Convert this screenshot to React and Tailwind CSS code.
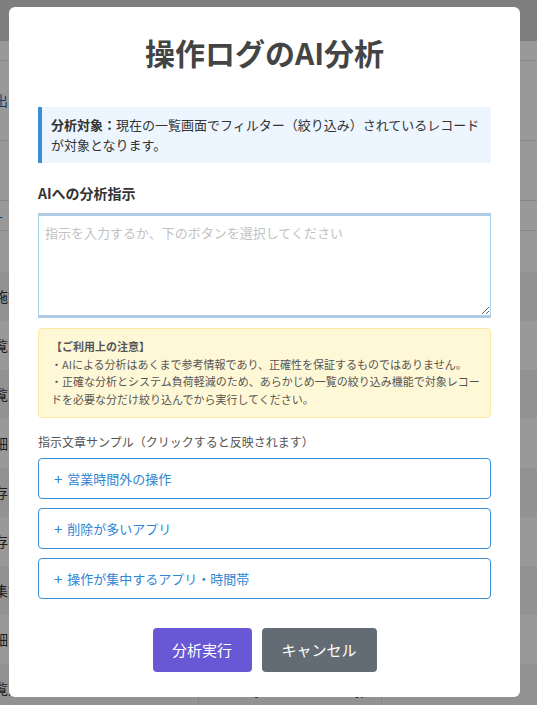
import { useState } from 'react'

const FONT = { fontFamily: '"Noto Sans CJK JP", "Noto Sans", sans-serif' }

const ROWS = [
  { name: '施設一覧', mail: 'sato_k@smxdo.co.jp', apps: '1,2,3' },
  { name: '覧照会', mail: 'tanaka_m@smxdo.co.jp', apps: '4,5' },
  { name: '覧照会', mail: 'suzuki_a@smxdo.co.jp', apps: '1,6' },
  { name: '細照会', mail: 'ito_y@smxdo.co.jp', apps: '2,3,7' },
  { name: '存', mail: 'kato_h@smxdo.co.jp', apps: '8' },
  { name: '存画面', mail: 'yamada_t@smxdo.co.jp', apps: '1,9' },
  { name: '集計', mail: 'kimura_s@smxdo.co.jp', apps: '3,4' },
  { name: '細照会', mail: 'hayashi_r@smxdo.co.jp', apps: '5,6' },
  { name: '覧照会（PC)', mail: 'kanko_jun@smxdo.co.jp', apps: '1,2,3,4,5,6,7,8,9' },
]

const SAMPLES = [
  '営業時間外の操作',
  '削除が多いアプリ',
  '操作が集中するアプリ・時間帯',
]

function BackgroundPage() {
  return (
    <div className="w-[537px] h-[705px] overflow-hidden bg-white text-[#333]" style={FONT}>
      <div className="h-[41px] bg-[#d4d4d4]" />
      <div className="h-[20px] border-b border-[#ddd]" />
      <div className="h-[80px] border-b border-[#ddd] flex items-center">
        <span className="-ml-[6px] text-[14px] text-[#1e6bb8]">出力</span>
      </div>
      <div className="h-[60px] border-b border-[#ddd]" />
      <div className="h-[30px] border-b border-[#ddd] flex items-center">
        <span className="-ml-[2px] text-[14px] text-[#1e6bb8]">-</span>
      </div>
      <div className="h-[41px]" />
      {ROWS.map((r, i) => (
        <div
          key={i}
          className={`h-[49px] grid grid-cols-[198px_183px_1fr] items-center text-[14px] ${i % 2 === 0 ? 'bg-[#f4f4f4]' : 'bg-white'}`}
        >
          <span className="-ml-[6px] whitespace-nowrap">{r.name}</span>
          <span className="h-full flex items-center pl-[9px] border-l border-[#ddd] whitespace-nowrap">{r.mail}</span>
          <span className="h-full flex items-center pl-[10px] border-l border-[#ddd] whitespace-nowrap">{r.apps}</span>
        </div>
      ))}
    </div>
  )
}

export default function App() {
  const [text, setText] = useState('')

  return (
    <div className="relative w-[537px] h-[705px] overflow-hidden">
      <BackgroundPage />

      {/* Overlay */}
      <div className="absolute inset-0 bg-black/40" />

      {/* Modal */}
      <div
        className="absolute left-[9px] top-[7px] w-[511px] h-[690px] bg-white rounded-[6px] px-[29px] pt-[28px]"
        style={FONT}
      >
        <h2 className="text-center text-[30px] leading-[34px] font-bold text-[#444]">
          操作ログのAI分析
        </h2>

        {/* Target info */}
        <div className="mt-[38px] bg-[#edf5fe] border-l-4 border-[#3a8fd8] pl-[9px] pr-[10px] py-[8px] text-[13px] leading-[20px] text-[#333]">
          <strong className="font-bold">分析対象：</strong>
          現在の一覧画面でフィルター（絞り込み）されているレコードが対象となります。
        </div>

        {/* Prompt */}
        <p className="mt-[20px] text-[14px] leading-[20px] font-bold text-[#333]">AIへの分析指示</p>
        <textarea
          value={text}
          onChange={(e) => setText(e.target.value)}
          placeholder="指示を入力するか、下のボタンを選択してください"
          className="mt-[10px] block w-full h-[105px] border border-[#a9d4ec] border-y-[3px] border-y-[#afcbe4] px-[6px] pt-[8px] pb-[6px] text-[13px] leading-[18px] text-[#333] placeholder:text-[#c2c2c2] outline-none resize-y"
        />

        {/* Notice */}
        <div className="mt-[10px] bg-[#fff8d7] border border-[#fde8a6] rounded-[4px] pl-[12px] pr-[4px] py-[9px] text-[11px] leading-[17.6px] text-[#555]">
          <p className="font-bold">【ご利用上の注意】</p>
          <p>・AIによる分析はあくまで参考情報であり、正確性を保証するものではありません。</p>
          <p>・正確な分析とシステム負荷軽減のため、あらかじめ一覧の絞り込み機能で対象レコードを必要な分だけ絞り込んでから実行してください。</p>
        </div>

        {/* Samples */}
        <p className="mt-[15px] text-[12px] leading-[18px] text-[#555]">
          指示文章サンプル（クリックすると反映されます）
        </p>
        <div className="mt-[7px] flex flex-col gap-[9px]">
          {SAMPLES.map((s) => (
            <button
              key={s}
              type="button"
              onClick={() => setText(s)}
              className="h-[41px] w-full flex items-center gap-[5px] border border-[#3a8fd8] rounded-[4px] pl-[15px] text-[13px] text-[#2f86d4] bg-white text-left"
            >
              <span className="text-[15px] leading-none">+</span>
              <span>{s}</span>
            </button>
          ))}
        </div>

        {/* Footer */}
        <div className="mt-[29px] flex justify-center gap-[10px]">
          <button type="button" className="h-[44px] w-[99px] rounded-[4px] bg-[#6858d6] text-white text-[15px]">
            分析実行
          </button>
          <button type="button" className="h-[44px] w-[115px] rounded-[4px] bg-[#636c74] text-white text-[15px]">
            キャンセル
          </button>
        </div>
      </div>
    </div>
  )
}
